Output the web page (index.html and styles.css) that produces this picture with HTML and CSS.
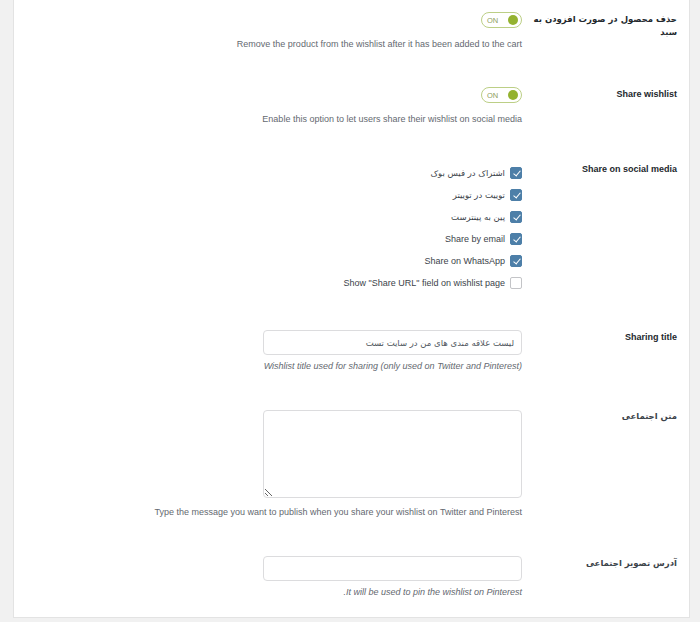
FILE: index.html
```html
<!DOCTYPE html>
<html lang="fa" dir="rtl">
<head>
    <meta charset="UTF-8">
    <meta name="viewport" content="width=device-width, initial-scale=1.0">
    <title>Wishlist settings</title>
    <link rel="stylesheet" href="styles.css">
</head>
<body>
    <div class="panel">
        <div class="row row-first">
            <div class="label fa">حذف محصول در صورت افزودن به سبد</div>
            <div class="field">
                <span class="toggle"><span class="toggle-text">ON</span><span class="toggle-dot"></span></span>
                <p class="desc">Remove the product from the wishlist after it has been added to the cart</p>
            </div>
        </div>

        <div class="row">
            <div class="label">Share wishlist</div>
            <div class="field">
                <span class="toggle"><span class="toggle-text">ON</span><span class="toggle-dot"></span></span>
                <p class="desc">Enable this option to let users share their wishlist on social media</p>
            </div>
        </div>

        <div class="row">
            <div class="label">Share on social media</div>
            <div class="field checks">
                <label class="check"><span class="box checked"></span><span class="fa">اشتراک در فیس بوک</span></label>
                <label class="check"><span class="box checked"></span><span class="fa">توییت در توییتر</span></label>
                <label class="check"><span class="box checked"></span><span class="fa">پین به پینترست</span></label>
                <label class="check"><span class="box checked"></span><span>Share by email</span></label>
                <label class="check"><span class="box checked"></span><span>Share on WhatsApp</span></label>
                <label class="check"><span class="box"></span><span>Show "Share URL" field on wishlist page</span></label>
            </div>
        </div>

        <div class="row">
            <div class="label">Sharing title</div>
            <div class="field">
                <input class="text-input" type="text" value="لیست علاقه مندی های من در سایت تست">
                <p class="desc desc-italic">Wishlist title used for sharing (only used on Twitter and Pinterest)</p>
            </div>
        </div>

        <div class="row">
            <div class="label fa label-plain">متن اجتماعی</div>
            <div class="field">
                <textarea class="text-area"></textarea>
                <p class="desc">Type the message you want to publish when you share your wishlist on Twitter and Pinterest</p>
            </div>
        </div>

        <div class="row row-last">
            <div class="label fa label-plain">آدرس تصویر اجتماعی</div>
            <div class="field">
                <input class="text-input" type="text" value="">
                <p class="desc desc-italic">It will be used to pin the wishlist on Pinterest.</p>
            </div>
        </div>
    </div>
</body>
</html>
```

FILE: styles.css
```css
body {
    margin: 0;
    background-color: #f1f1f1;
    font-family: "Liberation Sans", "DejaVu Sans", sans-serif;
    font-size: 9px;
    color: #3c434a;
    direction: rtl;
}
.panel {
    margin: 0 10px 0 13px;
    padding: 0 12px 0 10px;
    background: white;
    border: 1px solid #e3e3e3;
    border-top: none;
}
.row {
    display: grid;
    grid-template-columns: 145px 1fr;
    column-gap: 10px;
    padding: 18px 0 18px;
}
.row-first {
    padding-top: 12px;
}
.row-last {
    padding-top: 19px;
    padding-bottom: 18px;
}
.label {
    font-weight: bold;
    color: #23282d;
    line-height: 13px;
    padding-top: 1px;
}
.fa {
    font-family: "DejaVu Sans", sans-serif;
    font-size: 8.5px;
}
.label-plain {
    font-weight: 600;
    color: #3c434a;
}
.field {
    display: flex;
    flex-direction: column;
    align-items: flex-start;
}
.desc {
    margin: 9px 0 0;
    line-height: 14px;
    color: #646970;
}
.desc-italic {
    font-style: italic;
    margin-top: 4px;
}
.toggle {
    direction: ltr;
    display: inline-flex;
    align-items: center;
    justify-content: space-between;
    box-sizing: border-box;
    width: 41px;
    height: 16px;
    padding: 0 3px 0 5px;
    border: 1.5px solid #bccf86;
    border-radius: 8px;
}
.toggle-text {
    font-size: 7.5px;
    color: #8d9e5c;
}
.toggle-dot {
    width: 10px;
    height: 10px;
    border-radius: 50%;
    background: #94b230;
}
.check {
    display: flex;
    align-items: center;
    gap: 5px;
    height: 22px;
}
.box {
    box-sizing: border-box;
    width: 12px;
    height: 12px;
    border: 1px solid #c3c4c7;
    border-radius: 2px;
    background: white;
    position: relative;
}
.box.checked {
    background: #4d7fa8;
    border-color: #4d7fa8;
}
.box.checked::after {
    content: "";
    position: absolute;
    left: 3.5px;
    top: 1px;
    width: 3px;
    height: 6px;
    border: solid white;
    border-width: 0 1.2px 1.2px 0;
    transform: rotate(40deg);
}
.text-input, .text-area {
    box-sizing: border-box;
    width: 259px;
    border: 1px solid #dcdcde;
    border-radius: 4px;
    background: white;
    font-family: "DejaVu Sans", sans-serif;
    font-size: 8.5px;
    color: #50575e;
    margin: 0;
}
.text-input {
    height: 25px;
    padding: 0 7px;
}
.text-area {
    height: 88px;
    margin-top: 1px;
    resize: both;
}
.text-area + .desc {
    margin-top: 7px;
}
```
